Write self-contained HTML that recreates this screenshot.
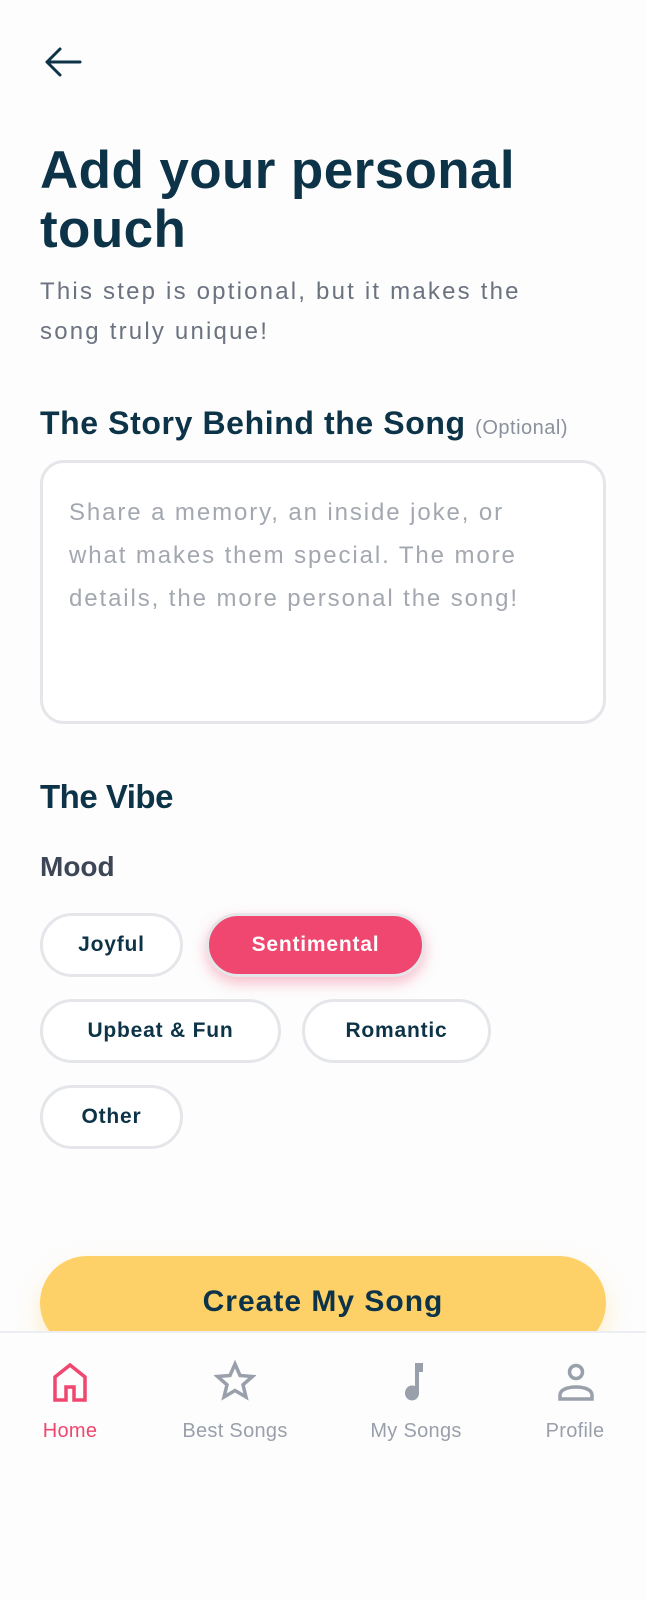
<!DOCTYPE html>
<html><head><meta charset="utf-8"><style>
*{box-sizing:border-box;margin:0;padding:0}
body{width:646px;height:1600px;background:#fdfdfd;font-family:"Liberation Sans",sans-serif;position:relative;overflow:hidden;color:#0c3347}
.abs{position:absolute}
h1{position:absolute;left:40px;top:141px;font-size:53px;line-height:59px;font-weight:700;color:#0c3347;letter-spacing:0.4px}
.sub{left:40px;top:272px;font-size:24px;line-height:40px;color:#6b7280;width:620px;letter-spacing:2.2px}
.h2{left:40px;top:405px;font-size:32px;font-weight:600;white-space:nowrap;letter-spacing:0.6px}
.h2 span{font-size:20px;color:#8a919c;font-weight:400;letter-spacing:0.5px}
.ta{left:40px;top:460px;width:566px;height:264px;border:3px solid #e4e6ea;border-radius:24px;background:#fff;padding:28px 26px;font-size:24px;line-height:43px;color:#a3a8b0;letter-spacing:1.9px;white-space:nowrap}
.vibe{left:40px;top:778px;font-size:33px;font-weight:700;letter-spacing:-0.5px}
.mood{left:40px;top:851px;font-size:28px;font-weight:700;color:#3d4656}
.chip{position:absolute;height:64px;border:3px solid #e4e6ea;border-radius:32px;background:#fff;font-size:21px;font-weight:700;color:#0c3347;display:flex;align-items:center;justify-content:center;letter-spacing:0.8px}
.sel{background:#ef476f;color:#fff;box-shadow:0 6px 14px rgba(239,71,111,.35)}
.btn{left:40px;top:1256px;width:566px;height:94px;border-radius:47px;background:#fed068;font-size:30px;font-weight:600;display:flex;justify-content:center;padding-top:29px;letter-spacing:1px;box-shadow:0 12px 24px rgba(254,208,104,.35)}
.nav{left:0;top:1331px;width:646px;height:269px;background:#fdfdfd;border-top:2px solid #eceef1}
.item{position:absolute;top:1420px;font-size:20px;color:#9aa0ab;transform:translateX(-50%);white-space:nowrap;letter-spacing:0.3px}
</style></head><body>
<svg class="abs" style="left:44px;top:46px" width="38" height="32" viewBox="0 0 38 32"><path d="M36 16H3M16 3L3 16l13 13" fill="none" stroke="#0c3347" stroke-width="3" stroke-linecap="round" stroke-linejoin="round"/></svg>
<h1>Add your personal<br>touch</h1>
<div class="abs sub">This step is optional, but it makes the<br>song truly unique!</div>
<div class="abs h2">The Story Behind the Song <span>(Optional)</span></div>
<div class="abs ta">Share a memory, an inside joke, or<br>what makes them special. The more<br>details, the more personal the song!</div>
<div class="abs vibe">The Vibe</div>
<div class="abs mood">Mood</div>
<div class="chip" style="left:40px;top:913px;width:143px">Joyful</div>
<div class="chip sel" style="left:206px;top:913px;width:219px">Sentimental</div>
<div class="chip" style="left:40px;top:999px;width:241px">Upbeat &amp; Fun</div>
<div class="chip" style="left:302px;top:999px;width:189px">Romantic</div>
<div class="chip" style="left:40px;top:1085px;width:143px">Other</div>
<div class="abs btn">Create My Song</div>
<div class="abs nav"></div>
<svg class="abs" style="left:52px;top:1362px" width="36" height="40" viewBox="0 0 36 40"><path d="M3 38V15L18 3l15 12v23H22V25h-8v13z" fill="none" stroke="#ef476f" stroke-width="3.5" stroke-linejoin="miter"/></svg>
<svg class="abs" style="left:214px;top:1360px" width="42" height="42" viewBox="0 0 42 42"><path d="M21 4l5 11.5 12.5 1-9.5 8.3 3 12.2L21 30.5 10 37l3-12.2L3.5 16.5 16 15.5z" fill="none" stroke="#9aa0ab" stroke-width="3.5" stroke-linejoin="miter"/></svg>
<svg class="abs" style="left:400px;top:1360px" width="30" height="42" viewBox="0 0 30 42"><rect x="15" y="3" width="4" height="30" fill="#9aa0ab"/><rect x="15" y="3" width="8" height="9" fill="#9aa0ab"/><ellipse cx="12" cy="33" rx="7" ry="7.5" fill="#9aa0ab"/></svg>
<svg class="abs" style="left:556px;top:1362px" width="40" height="40" viewBox="0 0 40 40"><circle cx="20" cy="10" r="6.5" fill="none" stroke="#9aa0ab" stroke-width="3.5"/><path d="M4 37v-4c0-5 7-8 16-8s16 3 16 8v4z" fill="none" stroke="#9aa0ab" stroke-width="3.5"/></svg>
<div class="item" style="left:70px;color:#ef476f">Home</div>
<div class="item" style="left:235px">Best Songs</div>
<div class="item" style="left:416px">My Songs</div>
<div class="item" style="left:575px">Profile</div>
</body></html>
